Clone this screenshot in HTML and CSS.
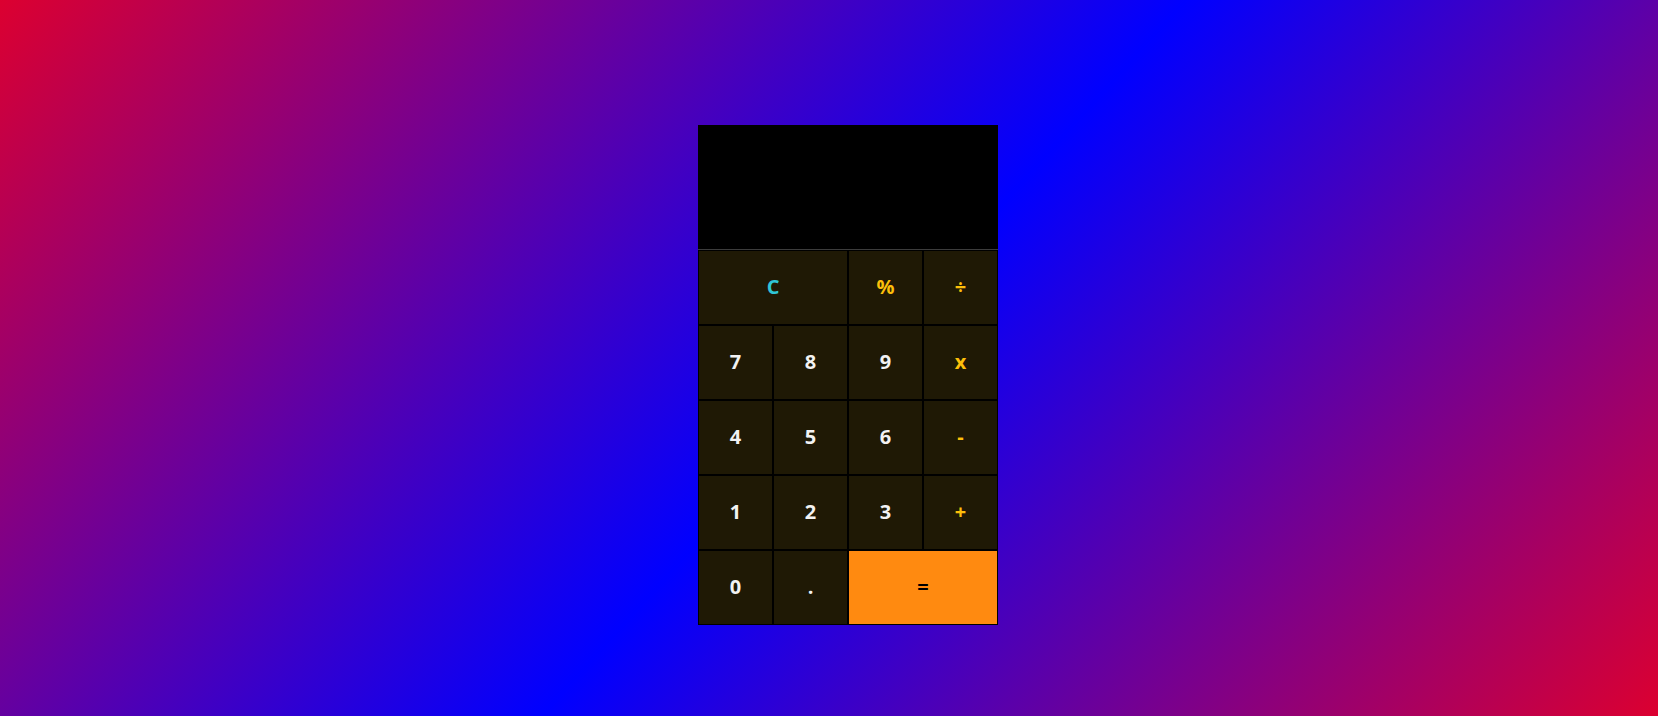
FILE: index.html
```html
<!DOCTYPE html>
<html>
<head>
<meta charset="utf-8">
<title>Calculator</title>
<link rel="stylesheet" href="styles.css">
</head>
<body>
<div class="page">
  <div class="calc">
    <div class="display"></div>
    <div class="keys">
      <button class="key span2 clear">C</button>
      <button class="key op">%</button>
      <button class="key op">÷</button>
      <button class="key">7</button>
      <button class="key">8</button>
      <button class="key">9</button>
      <button class="key op">x</button>
      <button class="key">4</button>
      <button class="key">5</button>
      <button class="key">6</button>
      <button class="key op">-</button>
      <button class="key">1</button>
      <button class="key">2</button>
      <button class="key">3</button>
      <button class="key op">+</button>
      <button class="key">0</button>
      <button class="key">.</button>
      <button class="key span2 equals">=</button>
    </div>
  </div>
</div>
</body>
</html>
```

FILE: styles.css
```css
html, body {
  margin: 0;
  height: 100%;
}

body {
  background: linear-gradient(132deg, #dc0030 0%, #0000ff 51.5%, #dc0030 100%);
  font-family: "Open Sans", "Liberation Sans", sans-serif;
}

.page {
  display: flex;
  justify-content: center;
  padding: 125px 0 0 38px;
}

.calc {
  width: 300px;
  display: flex;
  flex-direction: column;
}

.display {
  height: 124px;
  background: #000;
  border-bottom: 1px solid #3c3c3c;
}

.keys {
  display: grid;
  grid-template-columns: repeat(4, 75px);
  grid-auto-rows: 75px;
}

.key {
  box-sizing: border-box;
  border: 1px solid #000;
  background: #1f1905;
  color: #f2f2f2;
  font-family: "Open Sans", "Liberation Sans", sans-serif;
  font-weight: 700;
  font-size: 20px;
  padding: 0 0 2px;
  margin: 0;
  display: flex;
  align-items: center;
  justify-content: center;
}

.span2 {
  grid-column: span 2;
}

.op {
  color: #fcbf0a;
}

.clear {
  color: #2fc6d8;
}

.equals {
  background: #ff8a10;
  color: #000;
}
```
